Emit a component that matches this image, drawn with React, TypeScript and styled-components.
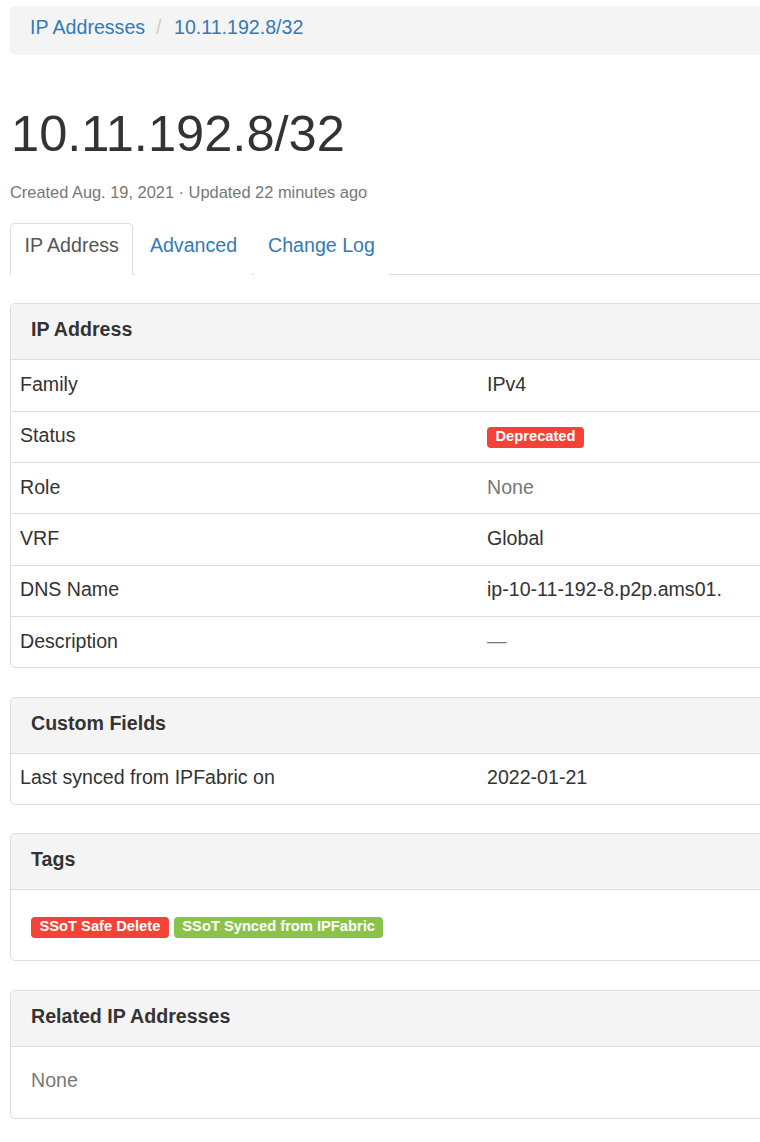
import React from "react"
import styled, { createGlobalStyle } from "styled-components"

const GlobalStyle = createGlobalStyle`
  *, *::before, *::after {
    box-sizing: border-box;
  }
  html, body {
    margin: 0;
    padding: 0;
    overflow-x: hidden;
  }
  body {
    background: #ffffff;
    color: #333333;
    font-family: "Liberation Sans", Arial, Helvetica, sans-serif;
    font-size: 19.6px;
    line-height: 28px;
  }
`

const Page = styled.div`
  width: 952px;
  padding: 6px 0 30px 10px;
`

const Breadcrumb = styled.ol`
  display: flex;
  align-items: flex-start;
  list-style: none;
  margin: 0;
  padding: 7.4px 20px 13.6px;
  height: 49px;
  background: #f4f4f4;
  border-radius: 5px;
`

const Crumb = styled.li`
  & + &::before {
    content: "/";
    color: #cccccc;
    margin: 0 12.5px 0 11px;
  }
`

const CrumbLink = styled.a`
  color: #337ab7;
  text-decoration: none;
`

const Title = styled.h1`
  margin: 51px 0 0 1px;
  font-size: 50.6px;
  line-height: 55px;
  font-weight: 400;
  color: #333333;
`

const Meta = styled.div`
  margin-top: 20.3px;
  font-size: 16.4px;
  line-height: 23.8px;
  color: #777777;
`

const Tabs = styled.ul`
  display: flex;
  list-style: none;
  margin: 17.9px 0 0;
  padding: 0;
  border-bottom: 1px solid #dddddd;
`

const Tab = styled.li`
  margin: 0 2px -1px 0;
`

const TabLink = styled.a<{ $active?: boolean }>`
  display: block;
  padding: 7px 13.5px 15px;
  line-height: 28px;
  border: 1px solid transparent;
  border-radius: 5px 5px 0 0;
  text-decoration: none;
  color: ${(p) => (p.$active ? "#555555" : "#337ab7")};
  background: #ffffff;
  ${(p) => p.$active && "border-color: #dddddd #dddddd transparent;"}
`

const Panel = styled.section`
  margin-top: 28.5px;
  border: 1px solid #dddddd;
  border-radius: 5px;
  overflow: hidden;
`

const PanelHeading = styled.div`
  padding: 11px 20px 16px;
  background: #f4f4f4;
  border-bottom: 1px solid #dddddd;
`

const PanelTitle = styled.h3`
  margin: 0;
  font-size: 19.6px;
  line-height: 28px;
  font-weight: 700;
  color: #333333;
`

const AttrTable = styled.table`
  width: 100%;
  border-collapse: collapse;
  table-layout: fixed;
`

const AttrRow = styled.tr`
  & + & td {
    border-top: 1px solid #dddddd;
  }
`

const AttrCell = styled.td<{ $label?: boolean }>`
  padding: 9.7px 9px 12.6px;
  line-height: 28px;
  vertical-align: top;
  width: ${(p) => (p.$label ? "467px" : "auto")};
`

const PanelBody = styled.div<{ $tags?: boolean }>`
  display: flex;
  gap: 5px;
  align-items: flex-start;
  padding: ${(p) => (p.$tags ? "27px 20px 22px" : "18.7px 20px 24.3px")};
  line-height: 28px;
`

const Muted = styled.span`
  color: #777777;
`

const Label = styled.span<{ $color: string }>`
  display: inline-block;
  padding: 1.5px 8.5px 4.8px;
  font-size: 14.7px;
  line-height: 14.7px;
  font-weight: 700;
  color: #ffffff;
  white-space: nowrap;
  background: ${(p) => p.$color};
  border-radius: 4px;
`

const StatusLabel = styled(Label)`
  vertical-align: top;
  margin-top: 5.7px;
`

const RED = "#f44336"
const GREEN = "#8bc34a"

type Attr = { label: string; value: React.ReactNode }

const attributes: Attr[] = [
  { label: "Family", value: "IPv4" },
  { label: "Status", value: <StatusLabel $color={RED}>Deprecated</StatusLabel> },
  { label: "Role", value: <Muted>None</Muted> },
  { label: "VRF", value: "Global" },
  { label: "DNS Name", value: "ip-10-11-192-8.p2p.ams01." },
  { label: "Description", value: <Muted>&mdash;</Muted> },
]

const customFields: Attr[] = [
  { label: "Last synced from IPFabric on", value: "2022-01-21" },
]

const AttrPanel: React.FC<{ title: string; rows: Attr[] }> = ({ title, rows }) => (
  <Panel>
    <PanelHeading>
      <PanelTitle>{title}</PanelTitle>
    </PanelHeading>
    <AttrTable>
      <tbody>
        {rows.map((r) => (
          <AttrRow key={r.label}>
            <AttrCell $label>{r.label}</AttrCell>
            <AttrCell>{r.value}</AttrCell>
          </AttrRow>
        ))}
      </tbody>
    </AttrTable>
  </Panel>
)

export default function App() {
  return (
    <>
      <GlobalStyle />
      <Page>
        <Breadcrumb>
          <Crumb>
            <CrumbLink href="#">IP Addresses</CrumbLink>
          </Crumb>
          <Crumb>
            <CrumbLink href="#">10.11.192.8/32</CrumbLink>
          </Crumb>
        </Breadcrumb>

        <Title>10.11.192.8/32</Title>
        <Meta>Created Aug. 19, 2021 · Updated 22 minutes ago</Meta>

        <Tabs>
          <Tab>
            <TabLink $active href="#">
              IP Address
            </TabLink>
          </Tab>
          <Tab>
            <TabLink href="#">Advanced</TabLink>
          </Tab>
          <Tab>
            <TabLink href="#">Change Log</TabLink>
          </Tab>
        </Tabs>

        <AttrPanel title="IP Address" rows={attributes} />
        <AttrPanel title="Custom Fields" rows={customFields} />

        <Panel>
          <PanelHeading>
            <PanelTitle>Tags</PanelTitle>
          </PanelHeading>
          <PanelBody $tags>
            <Label $color={RED}>SSoT Safe Delete</Label>
            <Label $color={GREEN}>SSoT Synced from IPFabric</Label>
          </PanelBody>
        </Panel>

        <Panel>
          <PanelHeading>
            <PanelTitle>Related IP Addresses</PanelTitle>
          </PanelHeading>
          <PanelBody>
            <Muted>None</Muted>
          </PanelBody>
        </Panel>
      </Page>
    </>
  )
}
